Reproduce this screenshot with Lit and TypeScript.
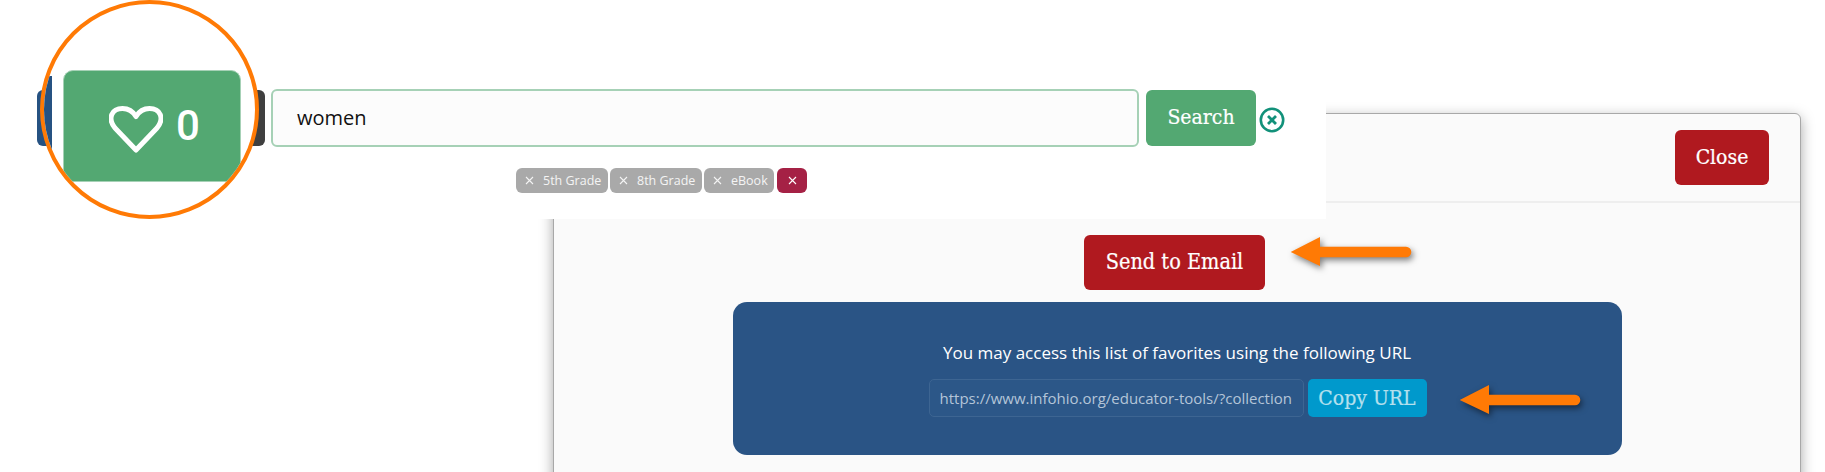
import { LitElement, html, css } from "lit";
import { customElement } from "lit/decorators.js";

const arrow = () => html`<svg class="arrow-svg" width="126" height="36" viewBox="0 0 126 36">
  <path d="M0.7 15 L30 0 V9.7 H116 a5.3 5.3 0 0 1 0 10.6 H30 V29 Z" fill="#ff7a05"></path>
</svg>`;

const cross = () => html`<svg class="chip-x" width="9" height="9" viewBox="0 0 9 9">
  <path d="M1 1 L8 8 M8 1 L1 8" stroke="currentColor" stroke-width="1.1" fill="none"></path>
</svg>`;

@customElement("app-root")
export class AppRoot extends LitElement {
  static styles = css`
    :host {
      display: block;
      position: relative;
      width: 1825px;
      height: 472px;
      overflow: hidden;
      background: #fff;
      font-family: "Open Sans", sans-serif;
    }
    .slab { font-family: "DejaVu Serif", serif; font-stretch: condensed; -webkit-text-stroke: 0.2px currentColor; }

    /* modal */
    .modal {
      box-sizing: border-box;
      width: 1248px;
      height: 420px;
      margin: 113px 0 0 553px;
      background: #fafafa;
      border: 1px solid #a8a8a8;
      border-radius: 6px;
      box-shadow: 0 4px 14px rgba(0, 0, 0, 0.35);
      display: flex;
      flex-direction: column;
    }
    .modal-head {
      box-sizing: border-box;
      height: 89px;
      flex: none;
      display: flex;
      justify-content: flex-end;
      align-items: flex-start;
      padding: 16px 31px 0 0;
      border-bottom: 2px solid #eeeeee;
    }
    .modal-body {
      display: flex;
      flex-direction: column;
      align-items: center;
      padding-top: 32px;
    }
    .btn-red {
      background: #b0191f;
      color: #fff;
      border-radius: 6px;
      display: flex;
      align-items: center;
      justify-content: center;
      font-size: 21px;
      height: 55px;
    }
    .close { width: 94px; padding-bottom: 2px; box-sizing: border-box; }
    .send { width: 181px; margin-right: 5px; font-size: 21.5px; padding-bottom: 2px; box-sizing: border-box; }
    .panel {
      box-sizing: border-box;
      width: 889px;
      height: 153px;
      margin-top: 12px;
      background: #2a5485;
      border-radius: 14px;
      display: flex;
      flex-direction: column;
      align-items: center;
      padding-top: 40px;
      color: #fff;
    }
    .panel-text { font-size: 17px; line-height: 24px; margin-top: -1px; }
    .url-row { display: flex; gap: 4px; margin-top: 14px; height: 38px; margin-left: 1px; }
    .url {
      box-sizing: border-box;
      width: 375px;
      border: 1px solid #3d6592;
      border-radius: 5px;
      background: #2c5788;
      color: #b4c5d8;
      font-size: 15px;
      display: flex;
      align-items: center;
      padding-left: 10px;
      white-space: nowrap;
      overflow: hidden;
    }
    .copy {
      width: 119px;
      background: #0099cc;
      color: #b5e0ee;
      border-radius: 5px;
      font-size: 21px;
      display: flex;
      align-items: center;
      justify-content: center;
    }

    /* search strip that lies over the modal */
    .strip {
      position: absolute;
      left: 0;
      top: 0;
      box-sizing: border-box;
      width: 1326px;
      height: 219px;
      background: #fff;
      padding: 89px 0 0 37px;
    }
    .bar { display: flex; align-items: flex-start; }
    .tool { height: 56px; margin-top: 1px; border-radius: 6px; }
    .tool-blue { width: 108px; background: #265282; }
    .tool-dark { width: 115px; margin-left: 5px; background: #3f3f3f; }
    .input {
      box-sizing: border-box;
      width: 868px;
      height: 58px;
      margin-left: 6px;
      border: 2.5px solid #a6d1b6;
      border-radius: 6px;
      background: #fcfcfc;
      color: #111;
      font-size: 20px;
      display: flex;
      align-items: center;
      padding: 0 0 2px 24px;
    }
    .search {
      box-sizing: border-box;
      width: 110px;
      height: 56px;
      margin: 1px 0 0 7px;
      background: #53a872;
      color: #fff;
      border-radius: 6px;
      font-size: 21px;
      display: flex;
      align-items: center;
      justify-content: center;
      padding-bottom: 3px;
    }
    .clear { margin: 18px 0 0 2.5px; display: block; }
    .chips {
      display: flex;
      gap: 2px;
      margin: 21px 0 0 479px;
    }
    .chip {
      box-sizing: border-box;
      height: 25px;
      border-radius: 6px;
      background: #a9a9a9;
      color: #f4f4f4;
      font-size: 12.5px;
      display: flex;
      align-items: center;
      padding-left: 9px;
    }
    .chip-x { margin-right: 9px; display: block; flex: none; }
    .w92 { width: 92px; }
    .w70 { width: 70px; }
    .chip-red {
      width: 30px;
      margin-left: 1px;
      padding-left: 0;
      justify-content: center;
      background: #a52145;
      color: #fff;
    }
    .chip-red .chip-x { margin: 0; }

    /* magnifying circle */
    .lens {
      position: absolute;
      left: 39.5px;
      top: 0;
      box-sizing: border-box;
      width: 219px;
      height: 219px;
      border: 4px solid #ff7a05;
      border-radius: 50%;
      background: #fff;
      overflow: hidden;
    }
    .lens-blue {
      position: absolute;
      left: 0;
      top: 72px;
      width: 8px;
      height: 74px;
      background: #265282;
    }
    .lens-btn {
      position: absolute;
      left: 19.5px;
      top: 66px;
      box-sizing: border-box;
      width: 178px;
      height: 112px;
      border: 1px solid #a6d1b6;
      border-radius: 10px;
      background: #53a872;
      color: #fff;
      display: flex;
      align-items: center;
      padding-left: 45px;
      gap: 13px;
    }
    .heart { display: block; flex: none; margin-top: 8px; }
    .count { font-family: Roboto, sans-serif; font-weight: 500; font-size: 42px; line-height: 1; }

    /* annotation arrows */
    .arrow { position: absolute; }
    .arrow-svg { display: block; overflow: visible; filter: drop-shadow(2px 3px 3px rgba(0, 0, 0, 0.5)); }
    .a1 { left: 1290px; top: 237px; }
    .a2 { left: 1458.5px; top: 384.5px; }
  `;

  render() {
    return html`
      <div class="modal">
        <div class="modal-head">
          <div class="btn-red close slab">Close</div>
        </div>
        <div class="modal-body">
          <div class="btn-red send slab">Send to Email</div>
          <div class="panel">
            <div class="panel-text">You may access this list of favorites using the following URL</div>
            <div class="url-row">
              <div class="url">https://www.infohio.org/educator-tools/?collection</div>
              <div class="copy slab">Copy URL</div>
            </div>
          </div>
        </div>
      </div>

      <div class="strip">
        <div class="bar">
          <div class="tool tool-blue"></div>
          <div class="tool tool-dark"></div>
          <div class="input">women</div>
          <div class="search slab">Search</div>
          <svg class="clear" width="26" height="26" viewBox="0 0 26 26">
            <circle cx="13" cy="13" r="11.2" fill="none" stroke="#12917a" stroke-width="2.6"></circle>
            <path d="M9 9 L17 17 M17 9 L9 17" stroke="#12917a" stroke-width="2.8" fill="none"></path>
          </svg>
        </div>
        <div class="chips">
          <div class="chip w92">${cross()}5th Grade</div>
          <div class="chip w92">${cross()}8th Grade</div>
          <div class="chip w70">${cross()}eBook</div>
          <div class="chip chip-red">${cross()}</div>
        </div>
      </div>

      <div class="lens">
        <div class="lens-blue"></div>
        <div class="lens-btn">
          <svg class="heart" width="54" height="48" viewBox="0 0 54 48">
            <path d="M27 44 L6 22 C-2 12 3 2.500 13.500 2.500 C19.500 2.500 24 5.500 27 10.500 C30 5.500 34.500 2.500 40.500 2.500 C51 2.500 56 12 48 22 Z"
              fill="none" stroke="#fff" stroke-width="5" stroke-linejoin="round"></path>
          </svg>
          <span class="count">0</span>
        </div>
      </div>

      <div class="arrow a1">${arrow()}</div>
      <div class="arrow a2">${arrow()}</div>
    `;
  }
}
